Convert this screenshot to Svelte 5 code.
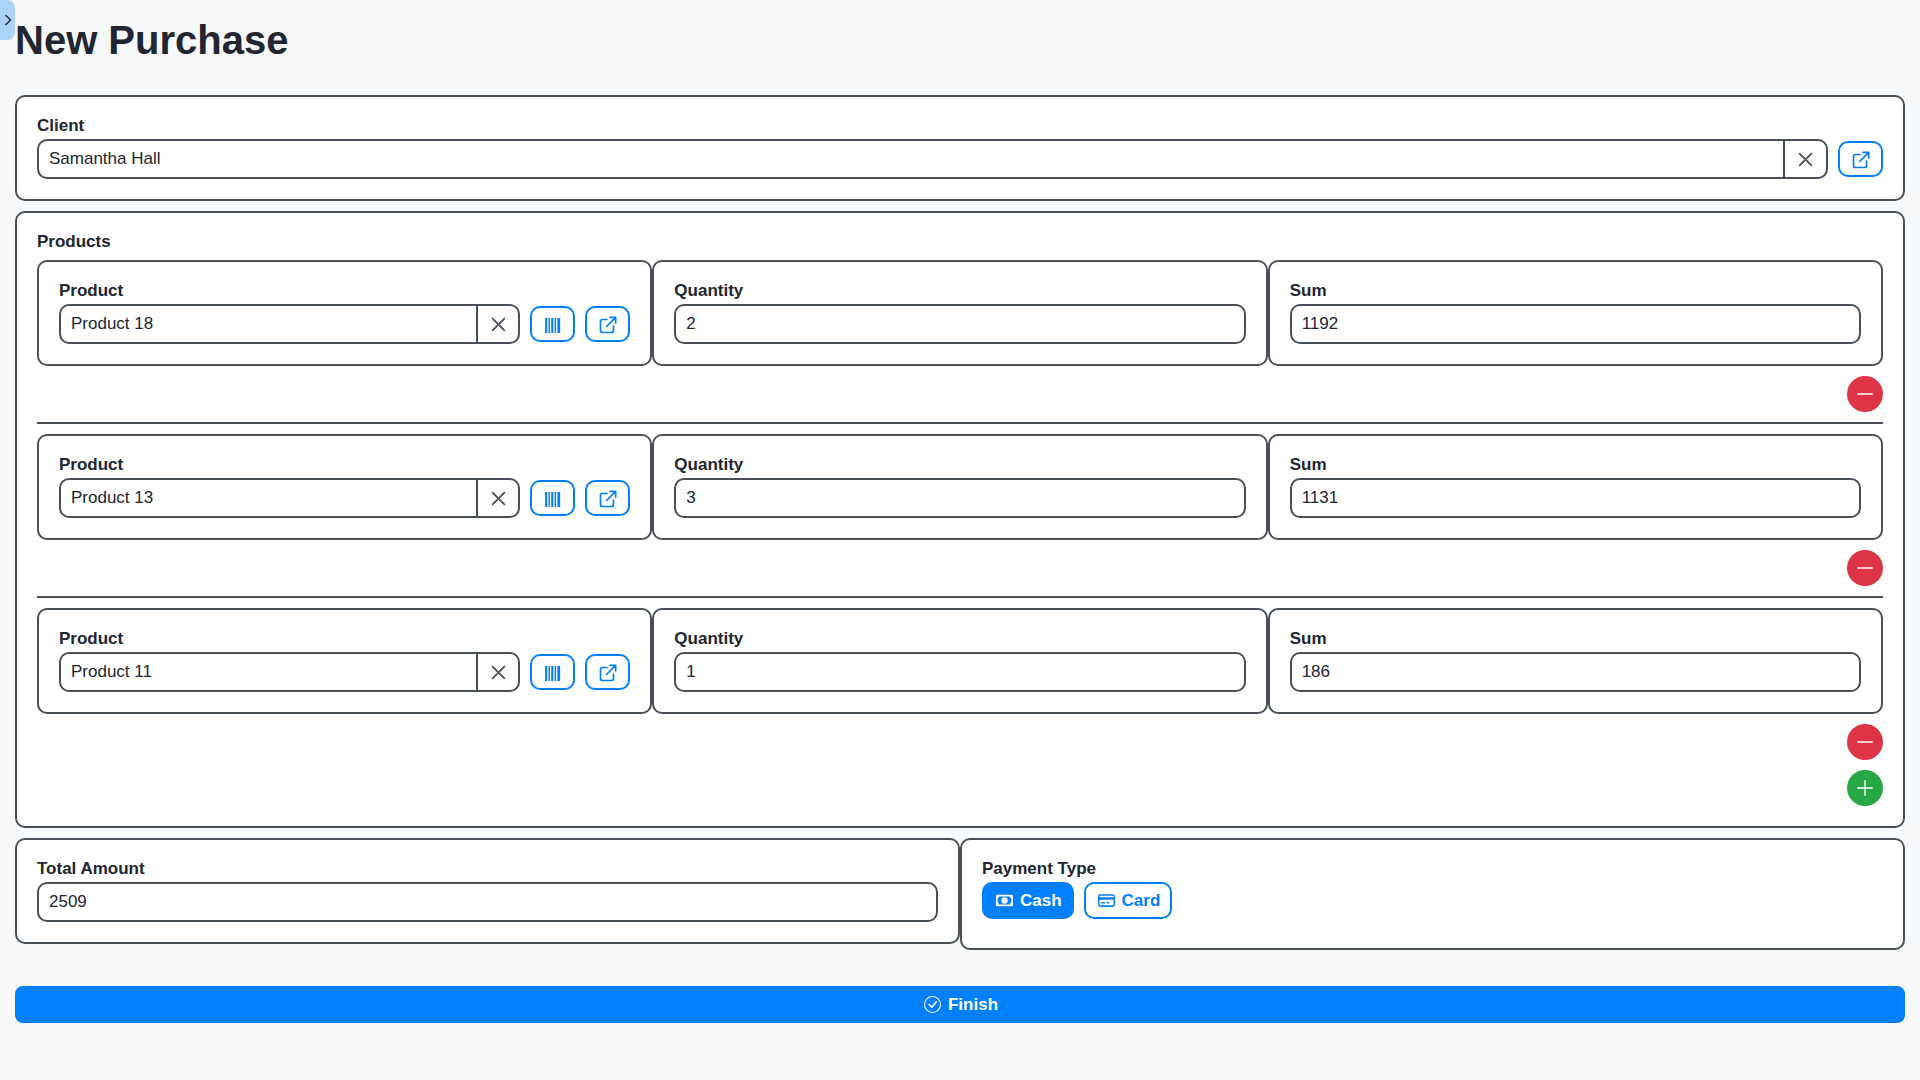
<script lang="ts">
	const items = [
		{ name: 'Product 18', qty: '2', sum: '1192' },
		{ name: 'Product 13', qty: '3', sum: '1131' },
		{ name: 'Product 11', qty: '1', sum: '186' }
	];
</script>

{#snippet clearIcon()}
	<svg width="17" height="17" viewBox="0 0 16 16" fill="currentColor" stroke="currentColor" stroke-width="0.9" aria-hidden="true">
		<path d="M2.146 2.854a.5.5 0 1 1 .708-.708L8 7.293l5.146-5.147a.5.5 0 0 1 .708.708L8.707 8l5.147 5.146a.5.5 0 0 1-.708.708L8 8.707l-5.146 5.147a.5.5 0 0 1-.708-.708L7.293 8z" />
	</svg>
{/snippet}

{#snippet linkIcon()}
	<svg width="18" height="18" viewBox="0 0 18 18" fill="none" stroke="currentColor" stroke-width="1.7" stroke-linecap="round" stroke-linejoin="round" aria-hidden="true">
		<path d="M8 3.500H3.500a2 2 0 0 0-2 2v9a2 2 0 0 0 2 2h9a2 2 0 0 0 2-2V10" />
		<path d="M7.500 10.500 16.200 1.800M11 1.300h5.700V7" />
	</svg>
{/snippet}

{#snippet barcodeIcon()}
	<svg width="17" height="17" viewBox="0 0 16 16" fill="currentColor" aria-hidden="true">
		<path d="M1 1h2v14H1zM4.200 1h1.400v14H4.200zM6.800 1h2v14h-2zM10 1h1.400v14H10zM12.600 1h2.600v14h-2.600z" />
	</svg>
{/snippet}

<div class="toggle">
	<svg width="8" height="12" viewBox="0 0 8 12" fill="none" aria-hidden="true">
		<path d="M1.500 1l5 5-5 5" stroke="#212529" stroke-width="1.400" />
	</svg>
</div>

<main class="page">
	<h1>New Purchase</h1>

	<section class="card client">
		<span class="label">Client</span>
		<div class="field-row">
			<div class="group">
				<input value="Samantha Hall" />
				<button class="clear">{@render clearIcon()}</button>
			</div>
			<button class="icon-btn">{@render linkIcon()}</button>
		</div>
	</section>

	<section class="card products">
		<span class="label products-label">Products</span>
		{#each items as item, i}
			<div class="product-row">
				<div class="card cell">
					<span class="label">Product</span>
					<div class="field-row">
						<div class="group">
							<input value={item.name} />
							<button class="clear">{@render clearIcon()}</button>
						</div>
						<button class="icon-btn">{@render barcodeIcon()}</button>
						<button class="icon-btn">{@render linkIcon()}</button>
					</div>
				</div>
				<div class="card cell">
					<span class="label">Quantity</span>
					<input class="solo" value={item.qty} />
				</div>
				<div class="card cell">
					<span class="label">Sum</span>
					<input class="solo" value={item.sum} />
				</div>
			</div>
			<div class="row-actions">
				<button class="round danger" aria-label="Remove">
					<svg width="16" height="16" viewBox="0 0 16 16" fill="currentColor" aria-hidden="true">
						<path d="M0 8a.75.75 0 0 1 .75-.75h14.500a.75.75 0 0 1 0 1.500H.75A.75.75 0 0 1 0 8" />
					</svg>
				</button>
			</div>
			{#if i < items.length - 1}
				<hr />
			{/if}
		{/each}
		<div class="row-actions add">
			<button class="round success" aria-label="Add">
				<svg width="16" height="16" viewBox="0 0 16 16" fill="currentColor" aria-hidden="true">
					<path d="M8 0a.75.75 0 0 1 .75.75v6.500h6.500a.75.75 0 0 1 0 1.500h-6.500v6.500a.75.75 0 0 1-1.500 0v-6.500H.75a.75.75 0 0 1 0-1.500h6.500V.75A.75.75 0 0 1 8 0" />
				</svg>
			</button>
		</div>
	</section>

	<div class="bottom">
		<section class="card half">
			<span class="label">Total Amount</span>
			<input class="solo" value="2509" />
		</section>
		<section class="card half">
			<span class="label">Payment Type</span>
			<div class="pay-options">
				<button class="pay active">
					<svg width="17" height="17" viewBox="0 0 16 16" fill="currentColor" aria-hidden="true">
						<path d="M8 11a3 3 0 1 0 0-6 3 3 0 0 0 0 6" />
						<path d="M0 3.500a1 1 0 0 1 1-1h14a1 1 0 0 1 1 1v9a1 1 0 0 1-1 1H1a1 1 0 0 1-1-1zm3 .8a1.400 1.400 0 0 1-1.400 1.400v4.600A1.400 1.400 0 0 1 3 11.700h10a1.400 1.400 0 0 1 1.400-1.400V5.700A1.400 1.400 0 0 1 13 4.300z" fill-rule="evenodd" />
					</svg>
					Cash
				</button>
				<button class="pay">
					<svg width="17" height="17" viewBox="0 0 16 16" fill="currentColor" aria-hidden="true">
						<path d="M14 3.500a.6.6 0 0 1 .6.6v7.800a.6.6 0 0 1-.6.6H2a.6.6 0 0 1-.6-.6V4.100a.6.6 0 0 1 .6-.6zM2 2a2 2 0 0 0-2 2v8a2 2 0 0 0 2 2h12a2 2 0 0 0 2-2V4a2 2 0 0 0-2-2z" fill-rule="evenodd" />
						<path d="M1 5h14v2.200H1zM3 9.500h3.500v1.400H3zM8 9.500h2.500v1.400H8z" />
					</svg>
					Card
				</button>
			</div>
		</section>
	</div>

	<button class="finish">
		<svg width="17" height="17" viewBox="0 0 16 16" fill="currentColor" aria-hidden="true">
			<path d="M8 15A7 7 0 1 1 8 1a7 7 0 0 1 0 14m0 1A8 8 0 1 0 8 0a8 8 0 0 0 0 16" />
			<path d="m10.970 4.970-.02.022-3.473 4.425-2.093-2.094a.75.75 0 0 0-1.060 1.060L6.970 11.030a.75.75 0 0 0 1.079-.02l3.992-4.990a.75.75 0 0 0-1.071-1.050" />
		</svg>
		Finish
	</button>
</main>

<style>
	:global(body) {
		background: #f7f8fa;
		color: #212630;
		font-family: 'Liberation Sans', Arial, sans-serif;
		font-size: 17px;
	}

	.page {
		padding: 15px;
	}

	h1 {
		margin: 1px 0 31px;
		font-size: 40px;
		line-height: 48px;
		font-weight: 700;
	}

	/* sidebar handle sits over the page corner */
	.toggle {
		position: absolute;
		top: 0;
		left: 0;
		width: 15px;
		height: 40px;
		display: flex;
		align-items: center;
		justify-content: center;
		background: rgba(0, 128, 255, 0.3);
		border-radius: 0 8px 8px 0;
	}

	.card {
		background: #fff;
		border: 2px solid #495057;
		border-radius: 10px;
		padding: 20px;
		box-sizing: border-box;
	}

	section.card {
		margin-bottom: 10px;
	}

	.label {
		display: block;
		font-weight: 700;
		line-height: 18px;
		margin-bottom: 4px;
	}

	.products-label {
		margin-bottom: 9px;
	}

	.field-row {
		display: flex;
		align-items: center;
		gap: 10px;
	}

	.group {
		flex: 1;
		display: flex;
		min-width: 0;
	}

	input {
		font: inherit;
		color: #212630;
		background: #fff;
		height: 40px;
		box-sizing: border-box;
		border: 2px solid #495057;
		border-radius: 10px;
		padding: 0 10px;
		outline: none;
	}

	.group input {
		flex: 1;
		min-width: 0;
		border-radius: 10px 0 0 10px;
	}

	.solo {
		display: block;
		width: 100%;
	}

	button {
		font: inherit;
		cursor: pointer;
	}

	.clear {
		width: 44px;
		height: 40px;
		margin-left: -2px;
		padding: 0;
		display: flex;
		align-items: center;
		justify-content: center;
		background: #fff;
		color: #495057;
		border: 2px solid #495057;
		border-radius: 0 10px 10px 0;
	}

	.client .clear {
		width: 45px;
	}

	.icon-btn {
		width: 45px;
		height: 36px;
		flex: none;
		padding: 2px 0 0;
		display: flex;
		align-items: center;
		justify-content: center;
		background: #fff;
		color: #0080ff;
		border: 2px solid #0080ff;
		border-radius: 10px;
	}

	.product-row {
		display: grid;
		grid-template-columns: repeat(3, 1fr);
	}

	.row-actions {
		display: flex;
		justify-content: flex-end;
		margin-top: 10px;
	}

	.round {
		width: 36px;
		height: 36px;
		padding: 0;
		display: flex;
		align-items: center;
		justify-content: center;
		border: none;
		border-radius: 50%;
		color: #fff;
	}

	.danger {
		background: #dc3545;
	}

	.success {
		background: #28a745;
	}

	hr {
		margin: 10px 0;
		border: none;
		height: 2px;
		background: #495057;
	}

	.bottom {
		display: flex;
		align-items: flex-start;
	}

	.half {
		flex: 1 1 0;
		min-width: 0;
	}

	.pay-options {
		display: flex;
		gap: 10px;
		margin-bottom: 9px;
	}

	.pay {
		height: 37px;
		display: flex;
		align-items: center;
		gap: 7px;
		padding: 0 10px 0 12px;
		font-weight: 700;
		color: #0080ff;
		background: #fff;
		border: 2px solid #0080ff;
		border-radius: 10px;
	}

	.pay.active {
		color: #fff;
		background: #0080ff;
	}

	.finish {
		width: 100%;
		height: 37px;
		margin-top: 26px;
		padding-left: 8px;
		display: flex;
		align-items: center;
		justify-content: center;
		gap: 7px;
		font-weight: 700;
		color: #fff;
		background: #0080ff;
		border: none;
		border-radius: 8px;
	}
</style>
